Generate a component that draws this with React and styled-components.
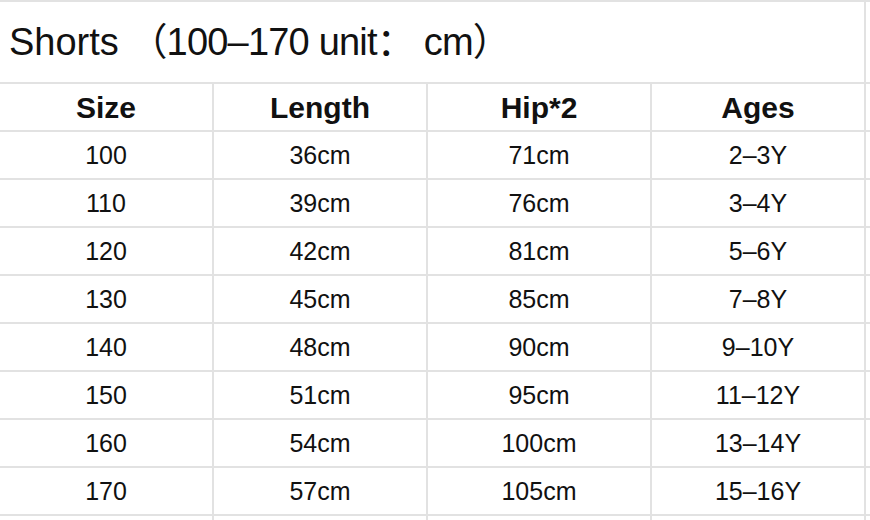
import styled, { createGlobalStyle } from "styled-components";

const GlobalStyle = createGlobalStyle`
  html, body {
    margin: 0;
    padding: 0;
    background: #ffffff;
  }
  body {
    font-family: "Liberation Sans", "Noto Sans CJK SC", Arial, sans-serif;
    color: #111111;
  }
`;

const LINE = "#e2e2e2";

const Wrapper = styled.div`
  width: 870px;
  height: 520px;
  overflow: hidden;
`;

const Table = styled.table`
  table-layout: fixed;
  border-collapse: separate;
  border-spacing: 0;
  border-top: 2px solid ${LINE};
  width: 930px;
`;

const Cell = styled.td`
  box-sizing: border-box;
  padding: 0;
  border-right: 2px solid ${LINE};
  border-bottom: 2px solid ${LINE};
  height: ${(p) => p.$h || 48}px;
  text-align: center;
  vertical-align: middle;
  font-size: 25px;
  line-height: 1;
  white-space: nowrap;
`;

const TitleCell = styled(Cell)`
  text-align: left;
  padding-left: 9px;
  font-size: 38px;
`;

const Paren = styled.span`
  letter-spacing: -0.8px;
`;

const HeadCell = styled(Cell)`
  font-size: 30px;
  font-weight: 700;
  padding-top: 2px;
`;

const rows = [
  ["100", "36cm", "71cm", "2–3Y"],
  ["110", "39cm", "76cm", "3–4Y"],
  ["120", "42cm", "81cm", "5–6Y"],
  ["130", "45cm", "85cm", "7–8Y"],
  ["140", "48cm", "90cm", "9–10Y"],
  ["150", "51cm", "95cm", "11–12Y"],
  ["160", "54cm", "100cm", "13–14Y"],
  ["170", "57cm", "105cm", "15–16Y"],
  ["", "", "", ""],
];

function App() {
  return (
    <Wrapper>
      <GlobalStyle />
      <Table>
        <colgroup>
          <col style={{ width: 214 }} />
          <col style={{ width: 214 }} />
          <col style={{ width: 224 }} />
          <col style={{ width: 214 }} />
          <col style={{ width: 64 }} />
        </colgroup>
        <tbody>
          <tr>
            <TitleCell colSpan={4} $h={82}>
              Shorts <Paren>（100–170 unit： cm）</Paren>
            </TitleCell>
            <Cell $h={82} />
          </tr>
          <tr>
            <HeadCell>Size</HeadCell>
            <HeadCell>Length</HeadCell>
            <HeadCell>Hip*2</HeadCell>
            <HeadCell>Ages</HeadCell>
            <Cell />
          </tr>
          {rows.map((r, i) => (
            <tr key={i}>
              {r.map((v, j) => (
                <Cell key={j}>{v}</Cell>
              ))}
              <Cell />
            </tr>
          ))}
        </tbody>
      </Table>
    </Wrapper>
  );
}

export default App;
